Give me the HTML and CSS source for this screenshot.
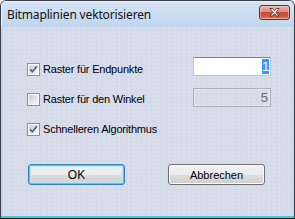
FILE: index.html
```html
<!DOCTYPE html>
<html>
<head>
<meta charset="utf-8">
<link rel="stylesheet" href="styles.css">
</head>
<body>
<div class="window">
  <div class="titlebar">
    <span class="title">Bitmaplinien vektorisieren</span>
    <div class="close">
      <svg width="31" height="15" viewBox="0 0 31 15">
        <path d="M11 3.5 L13.5 3.5 L15.5 5.8 L17.5 3.5 L20 3.5 L17 7.3 L20 11 L17.5 11 L15.5 8.7 L13.5 11 L11 11 L14 7.3 Z" fill="#fff" stroke="#4a1a14" stroke-width="0.8" stroke-linejoin="round"/>
      </svg>
    </div>
  </div>
  <div class="frame">
    <div class="client">
      <div class="row row-one">
        <div class="check">
          <svg class="box" width="13" height="13" viewBox="0 0 13 13">
            <defs>
              <linearGradient id="g1" x1="0" y1="0" x2="1" y2="1">
                <stop offset="0" stop-color="#cbcfd5"/>
                <stop offset="1" stop-color="#f6f6f6"/>
              </linearGradient>
            </defs>
            <rect x="0.5" y="0.5" width="12" height="12" fill="#fff" stroke="#8e8f8f"/>
            <rect x="2" y="2" width="9" height="9" fill="url(#g1)" stroke="#e9ecf0" stroke-width="0.5"/>
            <path d="M3.2 6.4 L5.4 8.8 L9.8 3.2" fill="none" stroke="#4c5f8e" stroke-width="1.7"/>
          </svg>
          <span>Raster für Endpunkte</span>
        </div>
        <div class="edit focused"><span class="sel">1</span></div>
      </div>
      <div class="row row-two">
        <div class="check">
          <svg class="box" width="13" height="13" viewBox="0 0 13 13">
            <defs>
              <linearGradient id="g2" x1="0" y1="0" x2="1" y2="1">
                <stop offset="0" stop-color="#cbcfd5"/>
                <stop offset="1" stop-color="#f6f6f6"/>
              </linearGradient>
            </defs>
            <rect x="0.5" y="0.5" width="12" height="12" fill="#fff" stroke="#8e8f8f"/>
            <rect x="2" y="2" width="9" height="9" fill="url(#g2)" stroke="#e9ecf0" stroke-width="0.5"/>
          </svg>
          <span>Raster für den Winkel</span>
        </div>
        <div class="edit disabled"><span class="val">5</span></div>
      </div>
      <div class="row row-three">
        <div class="check">
          <svg class="box" width="13" height="13" viewBox="0 0 13 13">
            <defs>
              <linearGradient id="g3" x1="0" y1="0" x2="1" y2="1">
                <stop offset="0" stop-color="#cbcfd5"/>
                <stop offset="1" stop-color="#f6f6f6"/>
              </linearGradient>
            </defs>
            <rect x="0.5" y="0.5" width="12" height="12" fill="#fff" stroke="#8e8f8f"/>
            <rect x="2" y="2" width="9" height="9" fill="url(#g3)" stroke="#e9ecf0" stroke-width="0.5"/>
            <path d="M3.2 6.4 L5.4 8.8 L9.8 3.2" fill="none" stroke="#4c5f8e" stroke-width="1.7"/>
          </svg>
          <span>Schnelleren Algorithmus</span>
        </div>
      </div>
      <div class="buttons">
        <div class="btn default">OK</div>
        <div class="btn">Abbrechen</div>
      </div>
    </div>
  </div>
</div>
</body>
</html>
```

FILE: styles.css
```css
html, body {
  margin: 0;
  padding: 0;
  background: #ffffff;
}

.window {
  width: 295px;
  height: 219px;
  box-sizing: border-box;
  border: 1px solid #3b3f45;
  border-bottom-color: #111;
  border-radius: 6px 6px 0 0;
  display: flex;
  flex-direction: column;
  overflow: hidden;
  background: #c2d6ee;
  font-family: "Liberation Sans", Arial, sans-serif;
  font-size: 11px;
  color: #000;
}

.titlebar {
  height: 26px;
  flex: none;
  display: flex;
  align-items: flex-start;
  padding: 4px 4px 0 6px;
  box-sizing: border-box;
  background: linear-gradient(#d6e4f5, #c0d5ed);
  box-shadow: inset 1px 1px 0 #e9f1fa;
}

.title {
  font-family: "Noto Sans", "Open Sans", sans-serif;
  font-size: 12px;
  line-height: 17px;
  color: #111;
  margin-top: 1px;
  letter-spacing: -0.15px;
}

.close {
  margin-left: auto;
  width: 31px;
  height: 15px;
  border: 1px solid #6b2a22;
  border-radius: 3px;
  box-sizing: border-box;
  background: linear-gradient(#e8b2a8 0%, #d98e80 45%, #c24b35 50%, #cc5a40 80%, #d88468 100%);
  box-shadow: inset 0 0 0 1px rgba(255, 220, 210, 0.5);
  display: flex;
  align-items: center;
  justify-content: center;
  overflow: hidden;
}

.close svg {
  display: block;
  margin: -1px;
}

.frame {
  flex: 1;
  display: flex;
  padding: 0 2px 2px 2px;
  background: #c2d6ee;
  box-shadow: inset 0 -2px 0 #3ccbe6, inset -2px 0 0 #c6dbf0;
}

.client {
  flex: 1;
  display: flex;
  flex-direction: column;
  padding: 30px 21px 0 24px;
  background-color: #d5dbe9;
  background-image:
    radial-gradient(circle at 1px 1px, rgba(236, 240, 248, 0.55) 0.6px, transparent 0.8px),
    radial-gradient(circle at 2px 3px, rgba(200, 207, 224, 0.45) 0.6px, transparent 0.8px);
  background-size: 5px 4px, 7px 5px;
}

.row {
  display: flex;
  align-items: flex-end;
  justify-content: space-between;
}

.row-one {
  height: 19px;
}

.row-two {
  height: 19px;
  margin-top: 12px;
}

.row-two .check {
  margin-bottom: 1px;
}

.row-three {
  height: 13px;
  margin-top: 16px;
}

.check {
  display: flex;
  align-items: center;
  height: 13px;
  gap: 3px;
}

.check .box {
  display: block;
  flex: none;
}

.check span {
  line-height: 13px;
  white-space: nowrap;
  letter-spacing: -0.2px;
}

.edit {
  width: 78px;
  height: 19px;
  box-sizing: border-box;
  display: flex;
  align-items: center;
  justify-content: flex-end;
  padding-right: 1px;
}

.edit.focused {
  background: #fff;
  border: 1px solid #a9cbe6;
  border-top-color: #4d8ac4;
}

.sel {
  background: #3399ff;
  color: #fff;
  font-size: 13px;
  line-height: 15px;
  width: 7px;
  text-align: center;
}

.edit.disabled {
  border: 1px solid #adb0b6;
  box-shadow: inset 0 0 0 1px #e4e7ee;
  padding-right: 2px;
}

.val {
  color: #6d6d6d;
  font-size: 13px;
  line-height: 15px;
}

.buttons {
  display: flex;
  margin-top: 28px;
  padding-left: 1px;
  gap: 43px;
}

.btn {
  width: 97px;
  height: 21px;
  box-sizing: border-box;
  border: 1px solid #707070;
  border-radius: 3px;
  background: linear-gradient(#f2f2f2 0%, #ebebeb 50%, #dddddd 51%, #cfcfcf 100%);
  box-shadow: inset 0 0 0 1px #fbfbfb;
  display: flex;
  align-items: center;
  justify-content: center;
  font-size: 11px;
  color: #000;
}

.btn.default {
  border-color: #3c7fb1;
  box-shadow: inset 0 0 0 1px #48cdf4, inset 0 0 0 2px #b5e8fa;
  font-size: 12px;
}
```
